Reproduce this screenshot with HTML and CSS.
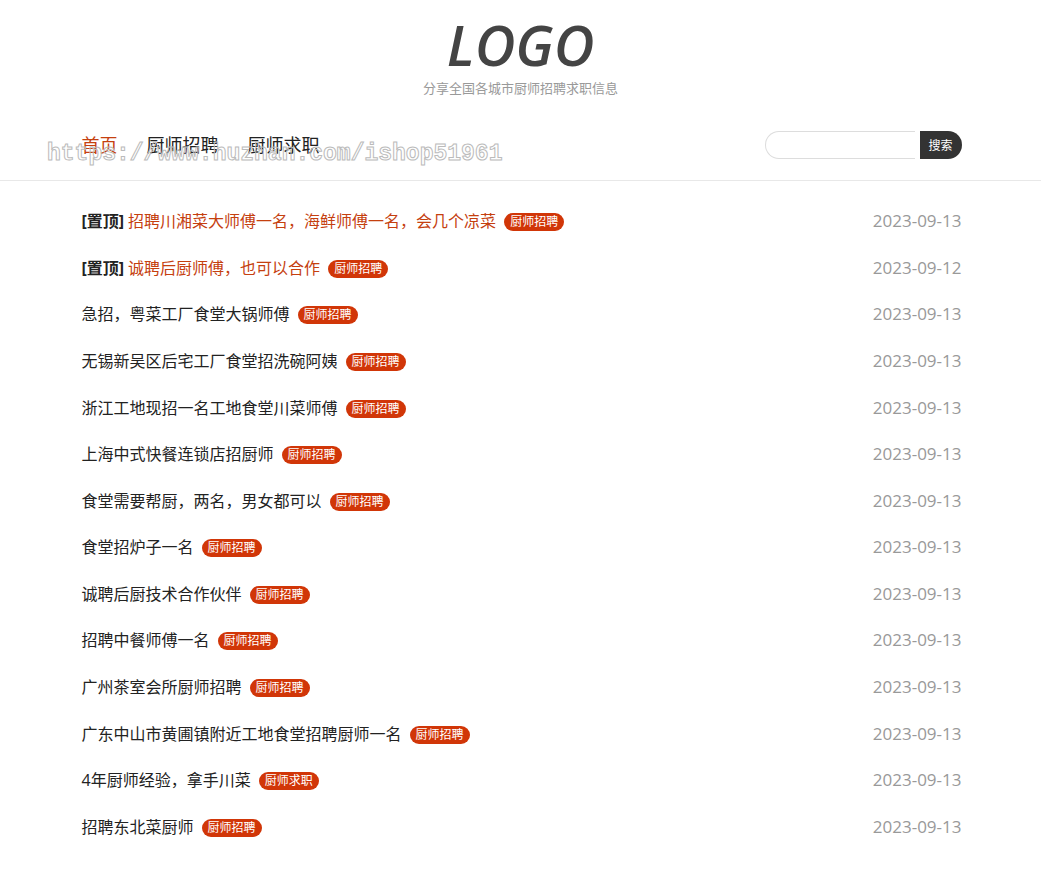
FILE: index.html
```
<!DOCTYPE html>
<html lang="zh-CN">
<head>
    <meta charset="UTF-8">
    <meta name="viewport" content="width=device-width, initial-scale=1.0">
    <title>厨师招聘求职</title>
    <link rel="stylesheet" href="styles.css">
</head>
<body>
    <header class="header">
        <h1 class="logo">LOGO</h1>
        <p class="tagline">分享全国各城市厨师招聘求职信息</p>
        <div class="container bar">
            <nav class="nav">
                <a class="active" href="#">首页</a>
                <a href="#">厨师招聘</a>
                <a href="#">厨师求职</a>
            </nav>
            <form class="search">
                <input type="text" name="q" aria-label="搜索">
                <button type="submit">搜索</button>
            </form>
        </div>
        <div class="watermark">https://www.huzhan.com/ishop51961</div>
    </header>

    <main class="container">
        <ul class="list">
            <li><b>[置顶]</b><a class="title top" href="#">招聘川湘菜大师傅一名，海鲜师傅一名，会几个凉菜</a><a class="tag" href="#">厨师招聘</a><time>2023-09-13</time></li>
            <li><b>[置顶]</b><a class="title top" href="#">诚聘后厨师傅，也可以合作</a><a class="tag" href="#">厨师招聘</a><time>2023-09-12</time></li>
            <li><a class="title" href="#">急招，粤菜工厂食堂大锅师傅</a><a class="tag" href="#">厨师招聘</a><time>2023-09-13</time></li>
            <li><a class="title" href="#">无锡新吴区后宅工厂食堂招洗碗阿姨</a><a class="tag" href="#">厨师招聘</a><time>2023-09-13</time></li>
            <li><a class="title" href="#">浙江工地现招一名工地食堂川菜师傅</a><a class="tag" href="#">厨师招聘</a><time>2023-09-13</time></li>
            <li><a class="title" href="#">上海中式快餐连锁店招厨师</a><a class="tag" href="#">厨师招聘</a><time>2023-09-13</time></li>
            <li><a class="title" href="#">食堂需要帮厨，两名，男女都可以</a><a class="tag" href="#">厨师招聘</a><time>2023-09-13</time></li>
            <li><a class="title" href="#">食堂招炉子一名</a><a class="tag" href="#">厨师招聘</a><time>2023-09-13</time></li>
            <li><a class="title" href="#">诚聘后厨技术合作伙伴</a><a class="tag" href="#">厨师招聘</a><time>2023-09-13</time></li>
            <li><a class="title" href="#">招聘中餐师傅一名</a><a class="tag" href="#">厨师招聘</a><time>2023-09-13</time></li>
            <li><a class="title" href="#">广州茶室会所厨师招聘</a><a class="tag" href="#">厨师招聘</a><time>2023-09-13</time></li>
            <li><a class="title" href="#">广东中山市黄圃镇附近工地食堂招聘厨师一名</a><a class="tag" href="#">厨师招聘</a><time>2023-09-13</time></li>
            <li><a class="title" href="#">4年厨师经验，拿手川菜</a><a class="tag" href="#">厨师求职</a><time>2023-09-13</time></li>
            <li><a class="title" href="#">招聘东北菜厨师</a><a class="tag" href="#">厨师招聘</a><time>2023-09-13</time></li>
        </ul>
    </main>
</body>
</html>
```
FILE: styles.css
```
* {
    box-sizing: border-box;
}
body {
    margin: 0;
    font-family: "Open Sans", "Noto Sans CJK SC", sans-serif;
    font-size: 16px;
    color: #222;
    background-color: #fff;
}
a {
    color: inherit;
    text-decoration: none;
}
.container {
    max-width: 882px;
    margin: 0 auto;
    padding-left: 2px;
}
.header {
    position: relative;
    padding-top: 14px;
    border-bottom: 1px solid #e8e8e8;
}
.logo {
    margin: 0;
    font-size: 56px;
    font-weight: 600;
    font-style: italic;
    line-height: 60px;
    text-align: center;
    color: #444;
}
.tagline {
    margin: 4px 0 0;
    font-size: 13px;
    line-height: 20px;
    text-align: center;
    color: #999;
}
.bar {
    display: flex;
    justify-content: space-between;
    align-items: center;
    height: 82px;
    padding-top: 12px;
}
.nav {
    display: flex;
    gap: 29px;
    font-size: 18px;
    line-height: 28px;
}
.nav .active,
.top {
    color: #c5400f;
}
.search {
    display: flex;
    gap: 5px;
}
.search input {
    width: 150px;
    height: 28px;
    padding: 0 12px;
    border: 1px solid #ddd;
    border-right: 0;
    border-radius: 14px 0 0 14px;
    outline: none;
}
.search button {
    width: 42px;
    height: 28px;
    padding: 0;
    border: 0;
    border-radius: 0 14px 14px 0;
    background-color: #333;
    color: #fff;
    font-family: inherit;
    font-size: 12px;
}
.watermark {
    position: absolute;
    left: 47px;
    bottom: 10px;
    font-family: "Liberation Mono", monospace;
    font-size: 23px;
    font-weight: bold;
    line-height: 32px;
    color: transparent;
    -webkit-text-stroke: 1px #bbb;
    pointer-events: none;
}
.list {
    display: grid;
    grid-auto-rows: 1fr;
    min-height: 652px;
    margin: 17px 0;
    padding: 0;
    list-style: none;
}
.list li {
    display: flex;
    align-items: center;
    line-height: 24px;
}
.list b {
    margin-right: 4px;
}
.tag {
    margin: 2px 0 0 8px;
    padding: 0 6px;
    border-radius: 9px;
    background-color: #d13608;
    color: #fff;
    font-size: 12px;
    line-height: 18px;
}
.list time {
    margin-left: auto;
    font-size: 17px;
    color: #999;
}
```
